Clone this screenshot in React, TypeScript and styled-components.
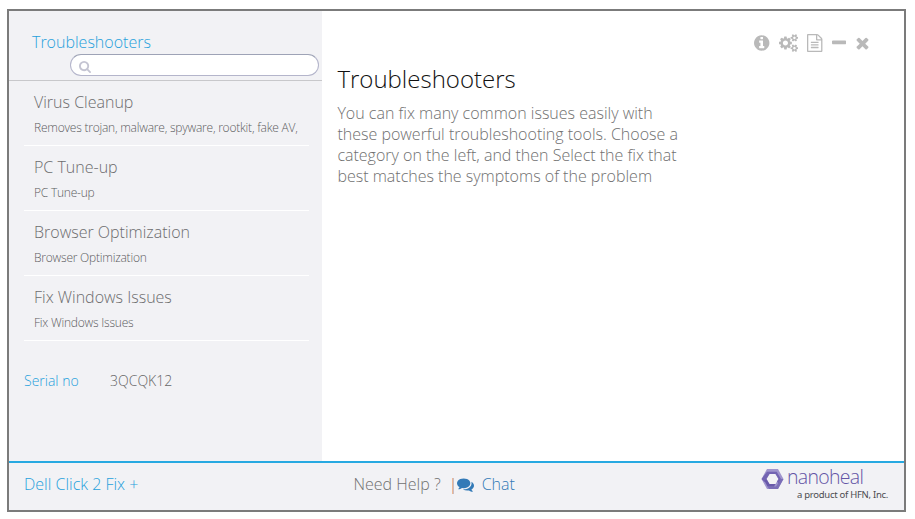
import React from "react";
import styled, { createGlobalStyle } from "styled-components";

const GlobalStyle = createGlobalStyle`
  * { box-sizing: border-box; }
  body {
    margin: 0;
    background: #fff;
    font-family: "Open Sans", "Noto Sans", sans-serif;
    font-weight: 300;
  }
`;

const Page = styled.div`
  height: 519px;
  padding: 9px 9px 7px 7px;
`;

const Window = styled.div`
  display: flex;
  flex-direction: column;
  height: 503px;
  border: 2px solid #7b7b7b;
  background: #fff;
`;

const Body = styled.div`
  display: flex;
  height: 450px;
`;

const Sidebar = styled.aside`
  width: 313px;
  background: #f2f2f5;
`;

const SidebarHeader = styled.header`
  display: flex;
  flex-direction: column;
  height: 70px;
  padding: 20px 3px 0 23px;
  border-bottom: 1px solid #c8c8cb;
`;

const SidebarTitle = styled.h2`
  margin: 0 0 1px;
  font-size: 16px;
  font-weight: 300;
  line-height: 22px;
  color: #27a1dc;
`;

const SearchBox = styled.label`
  display: flex;
  align-items: center;
  align-self: flex-end;
  width: 249px;
  height: 22px;
  padding: 3px 8px 0;
  border: 1px solid #b4b5cb;
  border-top-color: #9ea3b6;
  border-radius: 11px;
  background: #fff;
  color: #c4c4d2;
`;

const SearchInput = styled.input`
  flex: 1;
  min-width: 0;
  border: 0;
  outline: 0;
  background: transparent;
  font: inherit;
  font-size: 12px;
`;

const FixList = styled.ul`
  margin: 0;
  padding: 0 13px 0 15px;
  list-style: none;
`;

const FixItem = styled.li`
  height: 65px;
  padding: 10px 0 0 10px;
  border-bottom: 1px solid #fff;
  color: #6c6c6e;
`;

const FixName = styled.div`
  font-size: 16px;
  line-height: 22px;
`;

const FixSummary = styled.div`
  margin-top: 7px;
  font-size: 12px;
  line-height: 16px;
  letter-spacing: -0.22px;
  white-space: nowrap;
  color: #5c5c5e;
`;

const SerialRow = styled.div`
  display: flex;
  margin-top: 30px;
  padding-left: 15px;
  font-size: 14px;
  line-height: 20px;
`;

const SerialLabel = styled.span`
  width: 86px;
  color: #27a1dc;
`;

const SerialValue = styled.span`
  color: #666;
`;

const Content = styled.main`
  flex: 1;
  padding: 23px 35.5px 0 15.4px;
`;

const WindowTools = styled.div`
  display: flex;
  justify-content: flex-end;
  gap: 9.3px;
  height: 19px;
  color: #b9b9b9;
`;

const Icon = styled.svg`
  display: block;
  flex: none;
  fill: currentColor;
`;

const Heading = styled.h1`
  margin: 9px 0 0;
  font-size: 24px;
  font-weight: 300;
  line-height: 34px;
  color: #111;
`;

const Intro = styled.p`
  margin: 7px 0 0;
  font-size: 16px;
  line-height: 21px;
  color: #707070;
`;

const Footer = styled.footer`
  display: grid;
  grid-template-columns: 329.5px 407.5px 1fr;
  height: 49px;
  padding-left: 15px;
  border-top: 2px solid #27a9e1;
  background: #f2f2f5;
  font-size: 16px;
  line-height: 22px;
`;

const ProductName = styled.div`
  padding-top: 10px;
  color: #27a1dc;
`;

const Help = styled.div`
  display: flex;
  padding-top: 10px;
  color: #707070;
`;

const Divider = styled.span`
  width: 2px;
  height: 16px;
  margin: 5px 3px 0 11px;
  background: linear-gradient(90deg, #eeb894 50%, #c8bcc4 50%);
`;

const ChatLink = styled.a`
  display: flex;
  gap: 8px;
  color: #337ab7;
`;

const ChatIcon = styled(Icon)`
  margin-top: 3px;
`;

const Brand = styled.div`
  display: grid;
  grid-template-columns: 26px 1fr;
  grid-template-rows: 23px 14px;
  padding-top: 2px;
`;

const BrandMark = styled.svg`
  display: block;
  margin-top: 4px;
`;

const BrandName = styled.span`
  margin-top: 3px;
  font-size: 19.5px;
  line-height: 18px;
  color: #6455a6;
  letter-spacing: -0.7px;
`;

const BrandNote = styled.span`
  grid-column: 1 / -1;
  padding-left: 36px;
  font-family: "Noto Sans", sans-serif;
  font-size: 9.5px;
  font-weight: 400;
  line-height: 14px;
  letter-spacing: -0.28px;
  white-space: nowrap;
  color: #4c4c50;
`;

const fixes = [
  { name: "Virus Cleanup", summary: "Removes trojan, malware, spyware, rootkit, fake AV," },
  { name: "PC Tune-up", summary: "PC Tune-up" },
  { name: "Browser Optimization", summary: "Browser Optimization" },
  { name: "Fix Windows Issues", summary: "Fix Windows Issues" },
];

type Glyph = { label: string; x: number; width: number; d: string };

const tools: Glyph[] = [
  {
    label: "Information",
    x: 128,
    width: 1536,
    d: "M1152 1376v-160q0-14-9-23t-23-9h-96v-512q0-14-9-23t-23-9h-320q-14 0-23 9t-9 23v160q0 14 9 23t23 9h96v320h-96q-14 0-23 9t-9 23v160q0 14 9 23t23 9h448q14 0 23-9t9-23zm-128-896v-160q0-14-9-23t-23-9h-192q-14 0-23 9t-9 23v160q0 14 9 23t23 9h192q14 0 23-9t9-23zm640 416q0 209-103 385.5t-279.5 279.5-385.5 103-385.5-103-279.5-279.5-103-385.5 103-385.5 279.5-279.5 385.5-103 385.5 103 279.5 279.5 103 385.5z",
  },
  {
    label: "Settings",
    x: 0,
    width: 1920,
    d: "M896 896q0-106-75-181t-181-75-181 75-75 181 75 181 181 75 181-75 75-181zm768 512q0-52-38-90t-90-38-90 38-38 90q0 53 37.5 90.5t90.5 37.5 90.5-37.5 37.5-90.5zm0-1024q0-52-38-90t-90-38-90 38-38 90q0 53 37.5 90.5t90.5 37.5 90.5-37.5 37.5-90.5zm-384 421v185q0 10-7 19.5t-16 10.5l-155 24q-11 35-32 76 34 48 90 115 7 11 7 20 0 12-7 19-23 30-82.5 89.5t-78.5 59.5q-11 0-21-7l-115-90q-37 19-77 31-11 108-23 155-7 24-30 24h-186q-11 0-20-7.5t-10-17.5l-23-153q-34-10-75-31l-118 89q-7 7-20 7-11 0-21-8-144-133-144-160 0-9 7-19 10-14 41-53t47-61q-23-44-35-82l-152-24q-10-1-17-9.5t-7-19.5v-185q0-10 7-19.5t16-10.5l155-24q11-35 32-76-34-48-90-115-7-11-7-20 0-12 7-20 22-30 82-89t79-59q11 0 21 7l115 90q34-18 77-32 11-108 23-154 7-24 30-24h186q11 0 20 7.5t10 17.5l23 153q34 10 75 31l118-89q8-7 20-7 11 0 21 8 144 133 144 160 0 8-7 19-12 16-42 54t-45 60q23 48 34 82l152 23q10 2 17 10.5t7 19.5zm640 533v140q0 16-149 31-12 27-30 52 51 113 51 138 0 4-4 7-122 71-124 71-8 0-46-47t-52-68q-20 2-30 2t-30-2q-14 21-52 68t-46 47q-2 0-124-71-4-3-4-7 0-25 51-138-18-25-30-52-149-15-149-31v-140q0-16 149-31 13-29 30-52-51-113-51-138 0-4 4-7 4-2 35-20t59-34 30-16q8 0 46 46.500t52 67.500q20-2 30-2t30 2q51-71 92-112l6-2q4 0 124 70 4 3 4 7 0 25-51 138 17 23 30 52 149 15 149 31zm0-1024v140q0 16-149 31-12 27-30 52 51 113 51 138 0 4-4 7-122 71-124 71-8 0-46-47t-52-68q-20 2-30 2t-30-2q-14 21-52 68t-46 47q-2 0-124-71-4-3-4-7 0-25 51-138-18-25-30-52-149-15-149-31v-140q0-16 149-31 13-29 30-52-51-113-51-138 0-4 4-7 4-2 35-20t59-34 30-16q8 0 46 46.500t52 67.500q20-2 30-2t30 2q51-71 92-112l6-2q4 0 124 70 4 3 4 7 0 25-51 138 17 23 30 52 149 15 149 31z",
  },
  {
    label: "Report",
    x: 128,
    width: 1536,
    d: "M1596 380q28 28 48 76t20 88v1152q0 40-28 68t-68 28h-1344q-40 0-68-28t-28-68v-1600q0-40 28-68t68-28h896q40 0 88 20t76 48zm-444-244v376h376q-10-29-22-41l-313-313q-12-12-41-22zm384 1528v-1024h-416q-40 0-68-28t-28-68v-416h-768v1536h1280zm-1024-864q0-14 9-23t23-9h704q14 0 23 9t9 23v64q0 14-9 23t-23 9h-704q-14 0-23-9t-9-23v-64zm736 224q14 0 23 9t9 23v64q0 14-9 23t-23 9h-704q-14 0-23-9t-9-23v-64q0-14 9-23t23-9h704zm0 256q14 0 23 9t9 23v64q0 14-9 23t-23 9h-704q-14 0-23-9t-9-23v-64q0-14 9-23t23-9h704z",
  },
  {
    label: "Minimize",
    x: 192,
    width: 1408,
    d: "M1600 736v192q0 40-28 68t-68 28h-1216q-40 0-68-28t-28-68v-192q0-40 28-68t68-28h1216q40 0 68 28t28 68z",
  },
  {
    label: "Close",
    x: 250,
    width: 1290,
    d: "M1490 1322q0 40-28 68l-136 136q-28 28-68 28t-68-28l-294-294-294 294q-28 28-68 28t-68-28l-136-136q-28-28-28-68t28-68l294-294-294-294q-28-28-28-68t28-68l136-136q28-28 68-28t68 28l294 294 294-294q28-28 68-28t68 28l136 136q28 28 28 68t-28 68l-294 294 294 294q28 28 28 68z",
  },
];

const searchPath =
  "M1216 832q0-185-131.5-316.5t-316.5-131.5-316.5 131.5-131.5 316.5 131.5 316.5 316.5 131.5 316.5-131.5 131.5-316.5zm512 832q0 52-38 90t-90 38q-54 0-90-38l-343-342q-179 124-399 124-143 0-273.5-55.5t-225-150-150-225-55.5-273.5 55.5-273.5 150-225 225-150 273.5-55.5 273.5 55.5 225 150 150 225 55.5 273.5q0 220-124 399l343 343q37 37 37 90z";

const commentsPath =
  "M1408 768q0 139-94 257t-256.5 186.5-353.5 68.5q-86 0-176-16-124 88-278 128-36 9-86 16h-3q-11 0-20.5-8t-11.5-21q-1-3-1-6.500t.5-6.500 2-6l2.500-5 3.500-5.500 4-5 4.500-5 4-4.500q5-6 23-25t26-29.500 22.500-29 25-38.500 20.500-44q-124-72-195-177t-71-224q0-139 94-257t256.500-186.500 353.500-68.500 353.500 68.500 256.500 186.500 94 257zm384 256q0 120-71 224.500t-195 176.500q10 24 20.500 44t25 38.500 22.500 29 26 29.500 23 25q1 1 4 4.500t4.500 5 4 5 3.500 5.500l2.500 5 2 6 .5 6.500-1 6.500q-3 14-13 22t-22 7q-50-7-86-16-154-40-278-128-90 16-176 16-271 0-472-132 58 4 88 4 161 0 309-45t264-129q125-92 192-212t67-254q0-77-23-152 129 71 204 178t75 230z";

export default function App() {
  return (
    <Page>
      <GlobalStyle />
      <Window>
        <Body>
          <Sidebar>
            <SidebarHeader>
              <SidebarTitle>Troubleshooters</SidebarTitle>
              <SearchBox>
                <Icon width="12" height="12" viewBox="64 128 1664 1664">
                  <path d={searchPath} />
                </Icon>
                <SearchInput aria-label="Search" />
              </SearchBox>
            </SidebarHeader>
            <FixList>
              {fixes.map((f) => (
                <FixItem key={f.name}>
                  <FixName>{f.name}</FixName>
                  <FixSummary>{f.summary}</FixSummary>
                </FixItem>
              ))}
            </FixList>
            <SerialRow>
              <SerialLabel>Serial no</SerialLabel>
              <SerialValue>3QCQK12</SerialValue>
            </SerialRow>
          </Sidebar>
          <Content>
            <WindowTools>
              {tools.map((t) => (
                <Icon
                  key={t.label}
                  role="img"
                  aria-label={t.label}
                  width={t.width / 99.5}
                  height={18}
                  viewBox={`${t.x} 0 ${t.width} 1792`}
                >
                  <path d={t.d} />
                </Icon>
              ))}
            </WindowTools>
            <Heading>Troubleshooters</Heading>
            <Intro>
              You can fix many common issues easily with
              <br />
              these powerful troubleshooting tools. Choose a
              <br />
              category on the left, and then Select the fix that
              <br />
              best matches the symptoms of the problem
            </Intro>
          </Content>
        </Body>
        <Footer>
          <ProductName>Dell Click 2 Fix +</ProductName>
          <Help>
            <span>Need Help ?</span>
            <Divider />
            <ChatLink>
              <ChatIcon width="17" height="17" viewBox="0 0 1792 1792">
                <path d={commentsPath} />
              </ChatIcon>
              Chat
            </ChatLink>
          </Help>
          <Brand>
            <BrandMark width="23" height="20" viewBox="0 0 23 20">
              <path
                d="M6 0H17L22.500 10L17 20H6L0.500 10ZM8.500 5L5.500 10L8.500 15H14.500L17.500 10L14.500 5Z"
                fill="#9f94cd"
                fillRule="evenodd"
              />
              <path d="M6 2.700H15.700L20 10L17.500 14.500L16 12.500L17.500 10L14.500 5H8.500L3.500 13L0.500 10Z" fill="#6b5cad" fillOpacity="0.85" />
              <path d="M22.500 10L17 20H8L6.500 17.500H15L19.800 10Z" fill="#7769b5" fillOpacity="0.9" />
              <path d="M3.500 12L5.500 10L8.500 15H14.500L13 17.500H6.500Z" fill="#5b4aa0" fillOpacity="0.8" />
            </BrandMark>
            <BrandName>nanoheal</BrandName>
            <BrandNote>a product of HFN, Inc.</BrandNote>
          </Brand>
        </Footer>
      </Window>
    </Page>
  );
}
